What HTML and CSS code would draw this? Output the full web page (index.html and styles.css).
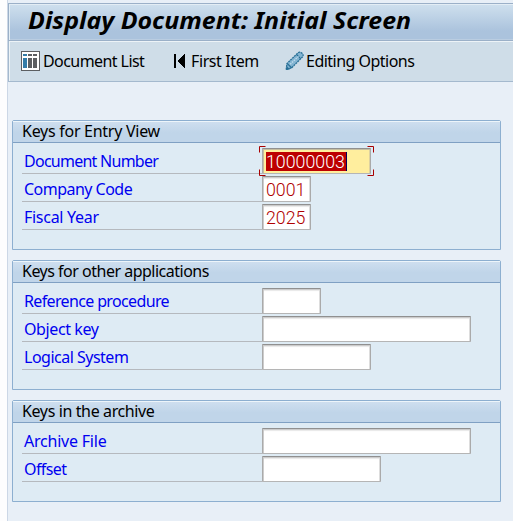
FILE: index.html
```html
<!DOCTYPE html>
<html lang="en">
<head>
<meta charset="utf-8">
<title>Display Document: Initial Screen</title>
<link rel="stylesheet" href="styles.css">
</head>
<body>
<main class="window">
  <h1 class="title"><span>Display Document: Initial Screen</span></h1>
  <nav class="toolbar">
    <button class="tool list">
      <svg width="19" height="20" viewBox="0 0 19 20" shape-rendering="crispEdges"><path fill="#5c5e61" d="M0 0h19v20H0z"/><path fill="#fff" d="M1 1h17v18H1z"/><path fill="#347ca8" d="M2 3h4v2H2zM2 7h4v10H2z"/><path fill="#5c5e61" d="M7 3h4v2H7zM12 3h4v2h-4zM7 7h4v10H7zM12 7h4v10h-4z"/></svg>
      <span>Document List</span>
    </button>
    <button class="tool first">
      <svg width="12" height="14" viewBox="0 0 12 14" shape-rendering="crispEdges"><path d="M0 0h2v14H0zM4 6h1V5h1V4h1V3h1V2h1V1h1V0h1v14h-1v-1H9v-1H8v-1H7v-1H6V9H5V8H4z"/></svg>
      <span>First Item</span>
    </button>
    <button class="tool edit">
      <svg width="19" height="20" viewBox="0 0 19 20"><path fill="#83b4d2" stroke="#286f96" stroke-width="1.3" stroke-dasharray="2 .7" d="M1.2 18.6 2 12.5 13 1.8Q15 .3 17 2.2 19 4.2 17.4 6L6.8 16.7Z"/><path stroke="#286f96" stroke-width="1.1" fill="none" d="m11.5 3.5 4.3 4.3M2.2 12.5 6.8 17"/><path stroke="#c2dcec" stroke-width="1.3" stroke-dasharray="1.5 1" d="m5.2 13.3 8.3-7.9"/><path fill="#286f96" d="m1 19 .5-4L5 18.2z"/></svg>
      <span>Editing Options</span>
    </button>
  </nav>
  <form class="content">
    <section class="group">
      <h2><span class="g1">Keys for Entry View</span></h2>
      <div class="row"><label><span class="l1">Document Number</span></label><div class="field w109 focused"><span class="selected">10000003</span><svg class="corners" width="115" height="30" viewBox="0 0 115 30"><path d="M.5 6.500V.5h6M108.500.5h6v6M.5 23.500v6h6M108.500 29.500h6v-6"/></svg></div></div>
      <div class="row"><label><span class="l2">Company Code</span></label><div class="field w49">0001</div></div>
      <div class="row"><label><span class="l3">Fiscal Year</span></label><div class="field w49">2025</div></div>
    </section>
    <section class="group">
      <h2><span class="g2">Keys for other applications</span></h2>
      <div class="row"><label><span class="l4">Reference procedure</span></label><div class="field w59"></div></div>
      <div class="row"><label><span class="l5">Object key</span></label><div class="field w209"></div></div>
      <div class="row"><label><span class="l6">Logical System</span></label><div class="field w109"></div></div>
    </section>
    <section class="group short">
      <h2><span class="g3">Keys in the archive</span></h2>
      <div class="row"><label><span class="l7">Archive File</span></label><div class="field w209"></div></div>
      <div class="row"><label><span class="l8">Offset</span></label><div class="field w119"></div></div>
    </section>
  </form>
</main>
</body>
</html>
```
FILE: styles.css
```css
* { box-sizing: border-box; }
body {
  margin: 0;
  height: 521px;
  overflow: hidden;
  background: #fdfdfe;
  font: 16px/20px "Noto Sans", sans-serif;
  color: #000;
}
.window {
  height: 521px;
  margin-left: 7px;
  padding-top: 3px;
  border-left: 1px solid #ccd7e6;
  background: #e8eff7;
}
.title {
  margin: 0;
  height: 38px;
  padding-left: 19px;
  border: 1px solid #9bb0c8;
  border-right: 0;
  box-shadow: inset 1px 1px #e3edf5, inset 0 -1px #bacde1;
  background: linear-gradient(#cfe0ee, #abc3dd 75%, #abc3dd);
  font: italic 700 23.2px/32px "Noto Sans", sans-serif;
  white-space: nowrap;
}
.title span {
  display: inline-block;
  transform: scaleX(1.075);
  transform-origin: left;
}
.toolbar {
  display: flex;
  align-items: center;
  height: 41px;
  padding-left: 12px;
  border-left: 1px solid #a4b9ce;
  border-bottom: 1px solid #a4b9ce;
  box-shadow: inset 1px 1px #edf3f7;
  background: #cfdde8;
}
.tool {
  display: flex;
  align-items: center;
  padding: 0;
  border: 0;
  background: none;
  font: inherit;
  color: inherit;
  white-space: nowrap;
}
.tool svg { flex: none; }
.list { width: 153px; gap: 3px; letter-spacing: -.57px; }
.first { width: 111px; gap: 5px; letter-spacing: -.4px; }
.edit { gap: 2px; letter-spacing: -.52px; }
.content {
  display: flex;
  flex-direction: column;
  gap: 10px;
  padding: 38px 12px 0 4px;
}
.group {
  height: 130px;
  border: 1px solid #8dafd0;
  border-radius: 2px 2px 0 0;
  background: #deebf4;
}
.short { height: 102px; }
.group h2 {
  height: 22px;
  margin: 0 0 5px;
  padding-left: 9px;
  border-bottom: 1px solid #7fa0c3;
  box-shadow: inset 0 1px #edf5fa;
  background: linear-gradient(#cfdfef, #c0d5e9 55%);
  font: inherit;
  line-height: 21px;
  white-space: nowrap;
}
.g1 { letter-spacing: -.27px; }
.g2 { letter-spacing: -.5px; }
.g3 { letter-spacing: -.38px; }
.l1 { letter-spacing: -.74px; }
.l2 { letter-spacing: -.52px; }
.l3 { letter-spacing: -.28px; }
.l4 { letter-spacing: -.64px; }
.l5 { letter-spacing: -.4px; }
.l6 { letter-spacing: -.5px; }
.l7 { letter-spacing: -.22px; }
.l8 { letter-spacing: -.6px; }
.row {
  display: flex;
  height: 26px;
  margin: 0 0 2px 9px;
}
label {
  width: 240px;
  padding-left: 2px;
  border-bottom: 1px solid #b5b9be;
  line-height: 26px;
  color: #0000f0;
  white-space: nowrap;
}
.field {
  position: relative;
  height: 26px;
  padding: 3px 2px 0 3px;
  border: 1px solid #aaa;
  border-top-color: #909090;
  border-bottom-color: #b5b5b5;
  border-radius: 1px;
  box-shadow: inset 1px 1px #ccc, inset -1px 0 #ddd, inset 0 2px 1px #e8e8e8;
  background: #fff;
  font: 300 17.8px/19px Roboto, sans-serif;
  color: #b00000;
  white-space: nowrap;
}
.w49 { width: 49px; }
.w59 { width: 59px; }
.w109 { width: 109px; }
.w119 { width: 119px; }
.w209 { width: 209px; }
.focused {
  background: #ffee9e;
  box-shadow: inset 1px 1px #c5bea0, inset -1px 0 #ddd1a0;
}
.selected {
  display: block;
  width: 81px;
  height: 19px;
  border-right: 1px solid #000060;
  background: #bd0000;
  color: #fff;
}
.corners {
  position: absolute;
  left: -4px;
  top: -3px;
  fill: none;
  stroke: #a80000;
}
```
